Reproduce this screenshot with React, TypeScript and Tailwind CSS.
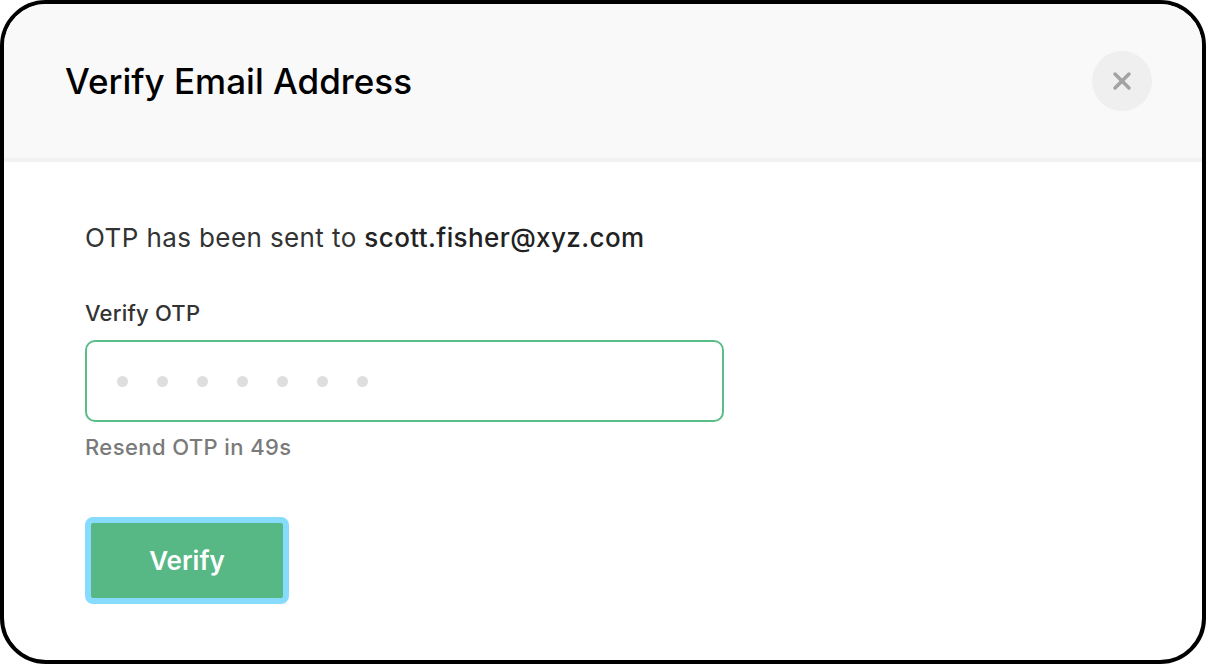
import { X } from "lucide-react";

const font = { fontFamily: "Inter, 'Noto Sans', sans-serif" };

export default function App() {
  return (
    <div className="h-[664px] w-[1206px] bg-white" style={font}>
      <div className="flex h-full w-full flex-col overflow-hidden rounded-[46px] border-4 border-black bg-white">
        <div className="flex h-[158px] shrink-0 items-center justify-between border-b-4 border-[#f2f2f2] bg-[#f9f9f9] pl-[61px] pr-[50px]">
          <h1 className="text-[35px] font-medium leading-none text-black">Verify Email Address</h1>
          <button
            type="button"
            className="flex h-[60px] w-[60px] items-center justify-center rounded-full bg-[#efefef] text-[#a3a3a3]"
          >
            <X size={28} strokeWidth={3} />
          </button>
        </div>

        <div className="flex flex-col pl-[81px] pt-[60px]">
          <p className="text-[26px] leading-[32px] tracking-[0.4px] text-[#333]">
            OTP has been sent to <span className="font-medium text-[#222]">scott.fisher@xyz.com</span>
          </p>

          <label className="mt-[46px] text-[22px] font-medium leading-[26px] tracking-[0.2px] text-[#333]">
            Verify OTP
          </label>

          <div className="mt-[14px] flex h-[82px] w-[639px] shrink-0 items-center gap-[29px] rounded-[10px] border-2 border-[#5bbd88] pl-[30px]">
            {Array.from({ length: 7 }).map((_, i) => (
              <span key={i} className="h-[11px] w-[11px] rounded-full bg-[#dedede]" />
            ))}
          </div>

          <p className="mt-[12px] text-[22px] font-medium leading-[26px] tracking-[0.4px] text-[#7a7a7a]">
            Resend OTP in 49s
          </p>

          <div className="mt-[57px]">
            <button
              type="button"
              className="h-[87px] w-[204px] rounded-[8px] border-[6px] border-[#87dbfd] bg-[#57b886] text-[26px] font-semibold text-white"
            >
              Verify
            </button>
          </div>
        </div>
      </div>
    </div>
  );
}
